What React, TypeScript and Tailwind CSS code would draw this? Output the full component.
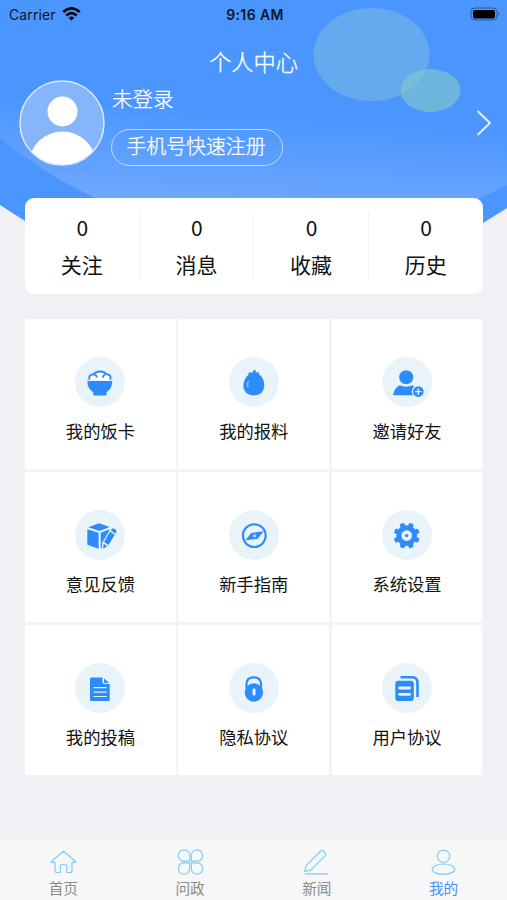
import type { ReactNode } from "react";

const BLUE = "#2e8bfb";
const PALE = "#e8f3fa";

const STATS = [
  { label: "关注", value: 0 },
  { label: "消息", value: 0 },
  { label: "收藏", value: 0 },
  { label: "历史", value: 0 },
];

const MENU: { label: string; icon: ReactNode }[] = [
  { label: "我的饭卡", icon: <BowlIcon /> },
  { label: "我的报料", icon: <FruitIcon /> },
  { label: "邀请好友", icon: <InviteIcon /> },
  { label: "意见反馈", icon: <FeedbackIcon /> },
  { label: "新手指南", icon: <CompassIcon /> },
  { label: "系统设置", icon: <GearIcon /> },
  { label: "我的投稿", icon: <DocIcon /> },
  { label: "隐私协议", icon: <LockIcon /> },
  { label: "用户协议", icon: <CopyIcon /> },
];

const TABS: { label: string; icon: ReactNode; active?: boolean }[] = [
  {
    label: "首页",
    icon: <path d="M13.5 2.2 1.6 12.3q-.8.9.3 1H5v8.200q0 2 2 2h3.300v-6.500q0-1.500 1.500-1.500h3.400q1.500 0 1.500 1.500v6.500H20q2 0 2-2v-8.200h3.100q1.100-.1.3-1L13.500 2.200Z" />,
  },
  {
    label: "问政",
    icon: (
      <>
        <path d="M12.700 12.200H7.300A5.700 5.700 0 1 1 12.700 6.500Z" />
        <path d="M14.300 12.200h5.400A5.700 5.700 0 1 0 14.300 6.500Z" />
        <path d="M12.700 13.800H7.300a5.700 5.700 0 1 0 5.400 5.700Z" />
        <path d="M14.300 13.800h5.400a5.700 5.700 0 1 1-5.400 5.700Z" />
      </>
    ),
  },
  {
    label: "新闻",
    icon: <path d="M1.700 22.300 3 16.600 17.600 2q1.200-1.200 2.400 0l2.200 2.200q1.200 1.200 0 2.400L7.600 21.200 1.700 22.300ZM1.700 24.800H25" />,
  },
  {
    label: "我的",
    active: true,
    icon: (
      <>
        <circle cx="13.500" cy="7.300" r="6.200" />
        <ellipse cx="13.500" cy="20.200" rx="11.300" ry="5.200" />
      </>
    ),
  },
];

export default function App() {
  return (
    <div className="flex h-[900px] w-[507px] flex-col overflow-hidden bg-[#f0f0f5] font-['Roboto','Noto_Sans_CJK_SC',sans-serif] text-[#111]">
      <header className="relative h-[197px] shrink-0">
        <HeaderArt />
        <div className="relative flex h-full flex-col">
          <StatusBar />
          <h1 className="mt-[19px] text-center text-[22.200px] leading-[32px] font-light text-white [-webkit-text-stroke:0.3px_white]">个人中心</h1>
          <div className="mt-[1px] flex pl-[19px]">
            <Avatar />
            <div className="ml-[6px] flex flex-1 flex-col items-start font-light text-white [-webkit-text-stroke:0.3px_white]">
              <span className="mt-[5px] pl-px text-[20.500px] leading-[30px]">未登录</span>
              <button className="mt-[14px] h-[37px] w-[172px] rounded-full border border-white/60 pr-[2px] text-[19.900px] leading-[36px]">
                手机号快速注册
              </button>
            </div>
            <svg className="mt-[29px] mr-[14px] h-[28px] w-[18px]" viewBox="0 0 18 28" fill="none" stroke="white" strokeOpacity=".85" strokeWidth="2">
              <path d="M2.500 2 15 14 2.500 26" />
            </svg>
          </div>
        </div>
      </header>

      <section className="relative mx-[25px] mt-[0.500px] flex h-[96.500px] w-[457.500px] shrink-0 items-center divide-x divide-[#f4f4f6] rounded-[9px] bg-white">
        {STATS.map((s) => (
          <div key={s.label} className="flex h-[69px] flex-1 flex-col items-center">
            <span className="mt-[1px] pl-px font-['Noto_Sans_CJK_SC',sans-serif] text-[21px] leading-[30px]">{s.value}</span>
            <span className="mt-[9px] text-[21px] leading-[30px]">{s.label}</span>
          </div>
        ))}
      </section>

      <section className="mx-[25px] mt-[25px] grid h-[456px] w-[457.500px] shrink-0 grid-cols-3 grid-rows-3 gap-[2.500px] bg-[#f3f3f5]">
        {MENU.map((m) => (
          <div key={m.label} className="flex flex-col items-center bg-white pt-[38px]">
            <svg className="size-[50px] rounded-full bg-[#e8f3fa]" viewBox="0 0 50 50">
              {m.icon}
            </svg>
            <span className="mt-[12px] text-[17.300px] leading-[26px]">{m.label}</span>
          </div>
        ))}
      </section>

      <nav className="mt-auto flex h-[60px] shrink-0 bg-[#f7f7f7]">
        {TABS.map((t) => (
          <div key={t.label} className={`flex flex-1 flex-col items-center pt-[9px] ${t.active ? "text-[#4795fc]" : "text-[#8b8b8b]"}`}>
            <svg className="h-[27px] w-[27px]" viewBox="0 0 27 27" fill="none" stroke="#7fcef5" strokeWidth="1.200" strokeLinejoin="round">
              {t.icon}
            </svg>
            <span className="mt-[1.500px] text-[14.700px] leading-[22px]">{t.label}</span>
          </div>
        ))}
      </nav>
    </div>
  );
}

function HeaderArt() {
  return (
    <svg className="absolute top-0 left-0 h-[240px] w-[507px]" viewBox="0 0 507 240">
      <defs>
        <linearGradient id="sweep" gradientUnits="userSpaceOnUse" x1="250" y1="112" x2="244" y2="205">
          <stop offset="0" stopColor="#4b96fe" />
          <stop offset="1" stopColor="#6ea7ff" />
        </linearGradient>
      </defs>
      <path d="M0 0H507V208L483 223Q254 330 25 221L0 205Z" fill="#4b96fe" />
      <path d="M0 60H507V185Q495 192 480 198Q280 270 93 197Q42 173 0 138Z" fill="url(#sweep)" />
      <ellipse cx="371.500" cy="54.500" rx="58" ry="46.500" fill="#65a9ee" />
      <ellipse cx="430.500" cy="90.500" rx="30" ry="21.500" fill="#86c9c8" fillOpacity=".6" />
    </svg>
  );
}

function StatusBar() {
  return (
    <div className="flex h-[28px] items-center font-['Inter',sans-serif] text-[14px] text-[#0b1728]">
      <div className="flex flex-1 items-center pl-[9px]">
        <span className="tracking-[0.100px]">Carrier</span>
        <svg className="ml-[6px] h-[14px] w-[19px]" viewBox="0 0 19 14" fill="none" stroke="#05080e" strokeWidth="2.700">
          <path d="M1.200 5Q9.500-2.300 17.800 5" />
          <path d="M4.300 8.400Q9.500 3.800 14.700 8.400" />
          <path d="M9.500 13.500 6.600 10.700Q9.500 8.200 12.400 10.700Z" fill="#05080e" stroke="none" />
        </svg>
      </div>
      <span className="font-semibold tracking-[0.400px]">9:16 AM</span>
      <div className="flex flex-1 justify-end pr-[6px]">
        <svg className="h-[14px] w-[31px]" viewBox="0 0 31 14">
          <rect x="1" y="1" width="26" height="12" rx="4" fill="none" stroke="#2c5a9a" />
          <rect x="3" y="3" width="22" height="8.500" rx="2" fill="#000" />
          <path d="M28.500 5q2 2 0 4Z" fill="#2c5a9a" />
        </svg>
      </div>
    </div>
  );
}

function Avatar() {
  return (
    <svg className="h-[86px] w-[86px]" viewBox="0 0 86 86">
      <defs>
        <clipPath id="avatar">
          <circle cx="43" cy="43" r="42" />
        </clipPath>
      </defs>
      <circle cx="43" cy="43" r="42" fill="#86b5fc" />
      <circle cx="43.500" cy="31.500" r="15" fill="white" />
      <ellipse cx="43.500" cy="83" rx="33" ry="31.500" fill="white" clipPath="url(#avatar)" />
      <circle cx="43" cy="43" r="42" fill="none" stroke="#dcebff" strokeWidth="1.500" />
    </svg>
  );
}

function BowlIcon() {
  return (
    <g fill={BLUE}>
      <path d="M12.300 24H37.300Q37 32 31.500 35.200V37.300Q31.500 38.500 30.300 38.500H19.300Q18.200 38.500 18.200 37.300V35.200Q12.600 32 12.300 24Z" />
      <path d="M14.500 22.800Q13 17.300 18.500 17.600Q20.300 14.400 24.800 14.400Q29.500 14.400 31.500 17.300Q36.600 17.300 35.300 22.800" fill="white" stroke={BLUE} strokeWidth="2" />
      <path d="M19.500 17.800Q21.800 18 21.800 20.500M30.300 17.500Q27.800 18.200 28 20.700" fill="none" stroke={BLUE} strokeWidth="1.800" />
    </g>
  );
}

function FruitIcon() {
  return (
    <>
      <path d="M19.500 17.500 19.800 15.300 22.300 15.800 23.800 15.300 24.600 13 26.300 13 27 15.500 29.600 15 30 17.200Q35.500 21.500 35.300 29Q34.500 38.500 24.800 38.500Q14.900 38 14.300 29.300Q14.500 22 19.500 17.500Z" fill={BLUE} />
      <path d="M19.800 24.200Q17.200 27.500 19.500 30.500" fill="none" stroke="#8fc0fc" strokeWidth="1.300" />
    </>
  );
}

function InviteIcon() {
  return (
    <>
      <circle cx="24.200" cy="20.200" r="7" fill={BLUE} />
      <path d="M11 38.300Q12.500 30.500 18 28.300Q24 31 30.500 28.300L32.500 29.800V38.300Z" fill={BLUE} />
      <circle cx="36.300" cy="34.600" r="6.500" fill={PALE} />
      <circle cx="36.300" cy="34.600" r="5.300" fill={BLUE} />
      <path d="M36.300 31.500v6.200M33.200 34.600h6.200" stroke={PALE} strokeWidth="1.400" />
    </>
  );
}

function FeedbackIcon() {
  return (
    <>
      <g fill={BLUE}>
        <path d="M13.300 17.300 24 13.300 34.700 17 24.500 21Z" />
        <path d="M12.300 19.300 23.600 22.700V38.800L12.300 34.800Z" />
        <path d="M25.700 22.700 34.500 19.200V24L27.500 33V37.500L25.700 38.600Z" />
      </g>
      <path d="M36.500 17 42.500 20.500 33 38 27 40.500V33Z" fill={PALE} />
      <path d="M35.800 20.300 37.200 18.400Q41.800 18.200 41.300 22.200L40.300 23.800Z" fill={BLUE} />
      <path d="M35.100 21.500 39.600 24.900 33.500 35 29 32Z" fill={BLUE} />
      <path d="M28.600 33.500 32.300 36.200 28.200 38.700Z" fill={BLUE} />
    </>
  );
}

function CompassIcon() {
  return (
    <>
      <circle cx="25.300" cy="25.600" r="11.400" fill="none" stroke={BLUE} strokeWidth="2.100" />
      <path fillRule="evenodd" d="M16.500 30.300 22.200 22.900 34.700 21.300 28.700 28.700ZM25.500 24.200a1.600 1.600 0 1 0 .1 0Z" fill={BLUE} />
      <circle cx="25.500" cy="25.800" r=".7" fill={BLUE} />
    </>
  );
}

function GearIcon() {
  return (
    <>
      <g fill={BLUE}>
        {[22.5, 67.5, 112.5, 157.5].map((a) => (
          <rect key={a} x="22.200" y="12.500" width="5" height="26.200" rx="1.600" transform={`rotate(${a} 24.700 25.600)`} />
        ))}
        <circle cx="24.700" cy="25.600" r="10.300" />
      </g>
      <circle cx="24.700" cy="25.600" r="5.300" fill={PALE} />
      <circle cx="24.700" cy="25.600" r="1.700" fill={BLUE} />
    </>
  );
}

function DocIcon() {
  return (
    <>
      <path d="M16.500 14.500H27.500V18.500Q27.500 21 30 21H34.700V36.500Q34.700 38 33.200 38H16.500Q15 38 15 36.500V16Q15 14.500 16.500 14.500Z" fill={BLUE} />
      <path d="M29 15.200 34 20H30Q29 20 29 19Z" fill={BLUE} />
      <path d="M18.500 24.700H31.800M18.500 29.200H31.800M18.500 33.500H31.800" stroke={PALE} strokeWidth="1.200" />
    </>
  );
}

function LockIcon() {
  return (
    <>
      <path d="M17.500 25V20.500Q18 14.400 24.700 14.400Q31.500 14.400 32 20.500V25" fill="none" stroke={BLUE} strokeWidth="2.200" />
      <circle cx="24.900" cy="29.500" r="9.200" fill={BLUE} />
      <rect x="23.600" y="25.500" width="2.900" height="7" rx="1.200" fill={PALE} />
    </>
  );
}

function CopyIcon() {
  return (
    <>
      <path d="M18.500 14.300H30.500Q35.500 14.500 35.500 20V34" fill="none" stroke={BLUE} strokeWidth="2.600" />
      <rect x="13.300" y="17.700" width="18.500" height="20.300" rx="3" fill={BLUE} />
      <path d="M17.500 25H27.700M17.500 31.300H27.700" stroke={PALE} strokeWidth="2.800" strokeLinecap="round" />
    </>
  );
}
